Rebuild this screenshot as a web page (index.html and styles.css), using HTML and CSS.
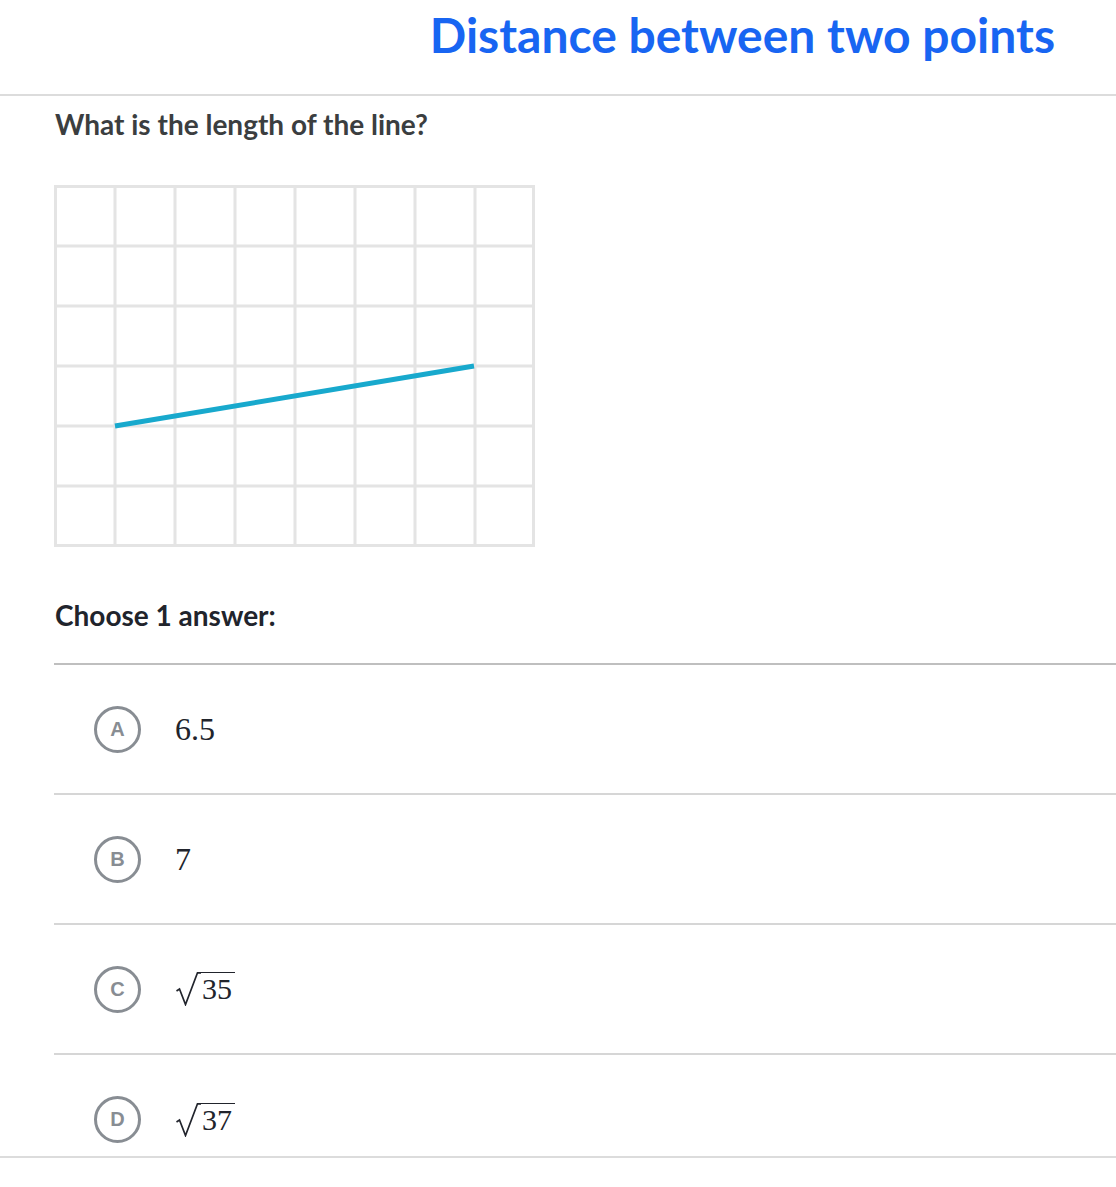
FILE: index.html
```html
<!DOCTYPE html>
<html>
<head>
<meta charset="utf-8">
<link rel="stylesheet" href="styles.css">
</head>
<body>
<header class="header">
  <h1 class="title">Distance between two points</h1>
</header>
<main class="content">
  <p class="question">What is the length of the line?</p>
  <svg class="graph" width="481" height="362" viewBox="0 0 481 362">
    <g stroke="#e4e4e4" stroke-width="3">
      <line x1="1.5" y1="0" x2="1.5" y2="362"/>
      <line x1="61" y1="0" x2="61" y2="362"/>
      <line x1="121" y1="0" x2="121" y2="362"/>
      <line x1="181" y1="0" x2="181" y2="362"/>
      <line x1="241" y1="0" x2="241" y2="362"/>
      <line x1="301" y1="0" x2="301" y2="362"/>
      <line x1="361" y1="0" x2="361" y2="362"/>
      <line x1="421" y1="0" x2="421" y2="362"/>
      <line x1="479.5" y1="0" x2="479.5" y2="362"/>
      <line x1="0" y1="1.5" x2="481" y2="1.5"/>
      <line x1="0" y1="61" x2="481" y2="61"/>
      <line x1="0" y1="121" x2="481" y2="121"/>
      <line x1="0" y1="181" x2="481" y2="181"/>
      <line x1="0" y1="241" x2="481" y2="241"/>
      <line x1="0" y1="301" x2="481" y2="301"/>
      <line x1="0" y1="360.5" x2="481" y2="360.5"/>
    </g>
    <line x1="61" y1="241" x2="420" y2="181" stroke="#18a9cd" stroke-width="5"/>
  </svg>
  <p class="choose">Choose 1 answer:</p>
  <ul class="choices">
    <li class="choice"><span class="letter">A</span><span class="math">6.5</span></li>
    <li class="choice"><span class="letter">B</span><span class="math">7</span></li>
    <li class="choice"><span class="letter">C</span><span class="math sqrt"><svg class="radical" width="25" height="34" viewBox="0 0 25 34"><path d="M0.5 19 L3.5 17 L9.5 32.5 L21.5 0.8 L25 0.8" fill="none" stroke="#21242c" stroke-width="1.7" stroke-linejoin="miter"/></svg><span class="radicand">35</span></span></li>
    <li class="choice"><span class="letter">D</span><span class="math sqrt"><svg class="radical" width="25" height="34" viewBox="0 0 25 34"><path d="M0.5 19 L3.5 17 L9.5 32.5 L21.5 0.8 L25 0.8" fill="none" stroke="#21242c" stroke-width="1.7" stroke-linejoin="miter"/></svg><span class="radicand">37</span></span></li>
  </ul>
</main>
<div class="bottom-rule"></div>
</body>
</html>
```
FILE: styles.css
```css
html, body {
  margin: 0;
  padding: 0;
  background: #fff;
}
body {
  font-family: Lato, "Noto Sans", sans-serif;
}
.header {
  height: 94px;
  border-bottom: 2px solid #dcdcdc;
  display: flex;
  justify-content: flex-end;
  padding-right: 61px;
}
.title {
  margin: 0;
  padding-top: 6px;
  font-size: 48px;
  font-weight: 700;
  color: #1865f2;
  line-height: 58px;
}
.content {
  padding-left: 54px;
}
.question {
  margin: 0;
  padding-top: 10px;
  font-size: 28px;
  font-weight: 700;
  color: #3b3e40;
  line-height: 36px;
  padding-left: 1px;
}
.graph {
  display: block;
  margin-top: 43px;
}
.choose {
  margin: 0;
  margin-top: 50px;
  font-size: 28px;
  font-weight: 700;
  color: #21242c;
  line-height: 36px;
  padding-left: 1px;
}
.choices {
  list-style: none;
  margin: 0;
  margin-top: 30px;
  padding: 0;
  border-top: 2px solid #bfbfbf;
}
.choice {
  height: 128px;
  display: flex;
  align-items: center;
  padding-left: 40px;
  border-bottom: 2px solid #d6d6d6;
}
.choice:last-child {
  border-bottom: none;
  height: 101px;
  align-items: flex-start;
  padding-top: 41px;
  box-sizing: border-box;
}
.letter {
  width: 41px;
  height: 41px;
  border: 3px solid #888d93;
  border-radius: 50%;
  display: flex;
  align-items: center;
  justify-content: center;
  font-family: "Liberation Sans", Arial, sans-serif;
  font-weight: 700;
  font-size: 20px;
  color: #888d93;
  flex: none;
}
.math {
  margin-left: 34px;
  font-family: "Liberation Serif", "Times New Roman", serif;
  font-size: 32px;
  line-height: 1;
  color: #21242c;
  display: flex;
  align-items: flex-start;
}
.sqrt {
  margin-left: 35px;
  font-size: 30px;
}
.choice:last-child .math {
  margin-top: 7px;
}
.radical {
  display: block;
  flex: none;
}
.radicand {
  border-top: 1.7px solid #21242c;
  line-height: 1;
  padding-left: 1px;
  padding-right: 3px;
  padding-top: 1px;
}
.bottom-rule {
  height: 0;
  border-top: 2px solid #dcdcdc;
}
```
